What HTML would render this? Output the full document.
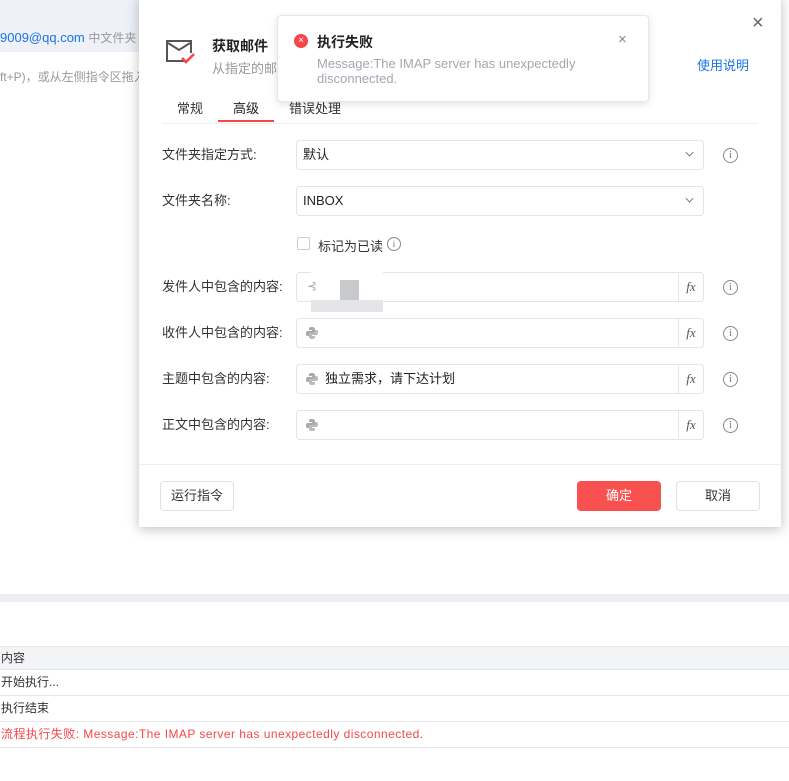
<!DOCTYPE html>
<html><head><meta charset="utf-8"><style>
*{margin:0;padding:0;box-sizing:border-box}
body{width:789px;height:781px;position:relative;overflow:hidden;background:#fff;font-family:"Liberation Sans","Noto Sans CJK SC",sans-serif;font-size:13px;color:#333}
.a{position:absolute;white-space:nowrap}
.lbl{position:absolute;left:162px;font-size:13px;color:#333;line-height:16px}
.inp{position:absolute;left:296px;width:408px;height:30px;border:1px solid #e3e5ea;border-radius:4px;background:#fff}
.inp .t{position:absolute;left:6px;top:6px;font-size:13px;color:#222;line-height:16px}
.chev{position:absolute;right:10px;width:7px;height:7px;border-right:1.2px solid #666;border-bottom:1.2px solid #666;transform:rotate(45deg) scale(.8);top:8px}
.fx{position:absolute;right:0;top:0;width:25px;height:28px;border-left:1px solid #e3e5ea;font-family:"Liberation Serif",serif;font-style:italic;font-size:13px;color:#555;text-align:center;line-height:28px}
.info{position:absolute;left:723px;width:15px;height:15px;border:1px solid #888;border-radius:50%;font-size:10px;line-height:13px;text-align:center;color:#777;font-family:"Liberation Serif",serif}
.py{position:absolute;left:9px;top:8px;width:12px;height:12px}
.row{position:absolute;left:0;width:789px;border-bottom:1px solid #e6e8eb;font-size:12px;line-height:25px;padding-left:1px;color:#333}
</style></head><body>
<div class="a" style="left:0;top:0;width:139px;height:52px;background:#eef1f8"></div>
<div class="a" style="left:0;top:29px;font-size:13px;color:#1a73e8">9009@qq.com <span style="color:#999;font-size:12px">中文件夹</span></div>
<div class="a" style="left:0;top:68px;font-size:12px;color:#999">ft+P)，或从左侧指令区拖入</div>
<div class="a" style="left:0;top:594px;width:789px;height:8px;background:#ebedf0"></div>
<div class="row" style="top:646px;height:24px;background:#f3f4f6;border-top:1px solid #e6e8eb;line-height:23px">内容</div>
<div class="row" style="top:670px;height:26px">开始执行...</div>
<div class="row" style="top:696px;height:26px">执行结束</div>
<div class="row" style="top:722px;height:26px;color:#f5474a;letter-spacing:0.45px">流程执行失败: Message:The IMAP server has unexpectedly disconnected.</div>

<div class="a" style="left:139px;top:-4px;width:642px;height:531px;background:#fff;box-shadow:0 2px 12px rgba(0,0,0,.25)"></div>
<svg class="a" style="left:165px;top:39px" width="32" height="28" viewBox="0 0 32 28"><path d="M21 22H2V2h24v12" fill="none" stroke="#555" stroke-width="2"/><path d="M3 4l11 7 11-7" fill="none" stroke="#555" stroke-width="2"/><path d="M17 19l4 4 8-8" fill="none" stroke="#f5474a" stroke-width="2.6"/></svg>
<div class="a" style="left:212px;top:36px;font-size:14px;font-weight:bold;color:#222">获取邮件</div>
<div class="a" style="left:212px;top:58px;font-size:13px;color:#999">从指定的邮</div>
<div class="a" style="left:697px;top:55px;font-size:13px;color:#1a73e8">使用说明</div>
<div class="a" style="left:752px;top:13px;font-size:20px;color:#666;line-height:20px">×</div>
<div class="a" style="left:177px;top:98px;font-size:13px;color:#333">常规</div>
<div class="a" style="left:233px;top:98px;font-size:13px;color:#222">高级</div>
<div class="a" style="left:218px;top:120px;width:56px;height:2px;background:#f5474a"></div>
<div class="a" style="left:289px;top:98px;font-size:13px;color:#333">错误处理</div>
<div class="a" style="left:162px;top:123px;width:596px;height:1px;background:#eceef1"></div>

<div class="lbl" style="top:147px">文件夹指定方式:</div>
<div class="inp" style="top:140px"><span class="t">默认</span><i class="chev"></i></div>
<div class="info" style="top:148px">i</div>
<div class="lbl" style="top:193px">文件夹名称:</div>
<div class="inp" style="top:186px"><span class="t">INBOX</span><i class="chev"></i></div>
<div class="a" style="left:297px;top:237px;width:13px;height:13px;border:1px solid #ccc;border-radius:2px"></div>
<div class="a" style="left:318px;top:236px;font-size:13px;color:#333">标记为已读</div>
<div class="info" style="left:387px;top:237px;width:14px;height:14px;font-size:9px;line-height:12px">i</div>

<div class="lbl" style="top:279px">发件人中包含的内容:</div>
<div class="inp" style="top:272px"><div class="fx">fx</div></div>
<div class="info" style="top:280px">i</div>
<div class="lbl" style="top:325px">收件人中包含的内容:</div>
<div class="inp" style="top:318px"><svg class="py" viewBox="0 0 12 12"><path d="M6 0C3 0 3 1 3 2v1h3v1H1.5C0 4 0 6 0 7c0 2 1 2 2 2h1V7.5C3 6.5 4 6 5 6h3c1 0 1-1 1-2V2C9 1 8 0 6 0z" fill="#aaa"/><path d="M6 12c3 0 3-1 3-2V9H6V8h4.5C12 8 12 6 12 5c0-2-1-2-2-2H9v1.5C9 5.5 8 6 7 6H4C3 6 3 7 3 8v2c0 1 1 2 3 2z" fill="#bbb"/></svg><div class="fx">fx</div></div>
<div class="info" style="top:326px">i</div>
<div class="lbl" style="top:371px">主题中包含的内容:</div>
<div class="inp" style="top:364px"><svg class="py" viewBox="0 0 12 12"><path d="M6 0C3 0 3 1 3 2v1h3v1H1.5C0 4 0 6 0 7c0 2 1 2 2 2h1V7.5C3 6.5 4 6 5 6h3c1 0 1-1 1-2V2C9 1 8 0 6 0z" fill="#aaa"/><path d="M6 12c3 0 3-1 3-2V9H6V8h4.5C12 8 12 6 12 5c0-2-1-2-2-2H9v1.5C9 5.5 8 6 7 6H4C3 6 3 7 3 8v2c0 1 1 2 3 2z" fill="#bbb"/></svg><span class="t" style="left:28px">独立需求，请下达计划</span><div class="fx">fx</div></div>
<div class="info" style="top:372px">i</div>
<div class="lbl" style="top:417px">正文中包含的内容:</div>
<div class="inp" style="top:410px"><svg class="py" viewBox="0 0 12 12"><path d="M6 0C3 0 3 1 3 2v1h3v1H1.5C0 4 0 6 0 7c0 2 1 2 2 2h1V7.5C3 6.5 4 6 5 6h3c1 0 1-1 1-2V2C9 1 8 0 6 0z" fill="#aaa"/><path d="M6 12c3 0 3-1 3-2V9H6V8h4.5C12 8 12 6 12 5c0-2-1-2-2-2H9v1.5C9 5.5 8 6 7 6H4C3 6 3 7 3 8v2c0 1 1 2 3 2z" fill="#bbb"/></svg><div class="fx">fx</div></div>
<div class="info" style="top:418px">i</div>

<div class="a" style="left:311px;top:272px;width:72px;height:40px;background:#fff"></div>
<div class="a" style="left:311px;top:300px;width:72px;height:12px;background:#e4e5e9"></div>
<div class="a" style="left:340px;top:280px;width:19px;height:20px;background:#c8c9cc"></div>
<div class="a" style="left:307px;top:279px;font-size:12px;color:#aaa">⊰</div>

<div class="a" style="left:139px;top:464px;width:642px;height:1px;background:#eceef1"></div>
<div class="a" style="left:160px;top:481px;width:74px;height:30px;border:1px solid #dfe1e5;border-radius:4px;text-align:center;line-height:28px;font-size:13px">运行指令</div>
<div class="a" style="left:577px;top:481px;width:84px;height:30px;background:#f85150;border-radius:4px;text-align:center;line-height:30px;font-size:13px;color:#fff">确定</div>
<div class="a" style="left:676px;top:481px;width:84px;height:30px;border:1px solid #dfe1e5;border-radius:4px;text-align:center;line-height:28px;font-size:13px">取消</div>

<div class="a" style="left:277px;top:15px;width:372px;height:87px;background:#fff;border:1px solid #e6e7ea;border-radius:4px;box-shadow:0 2px 8px rgba(0,0,0,.12)"></div>
<div class="a" style="left:294px;top:34px;width:14px;height:14px;border-radius:50%;background:#f5474a;color:#fff;font-size:10px;line-height:13px;text-align:center">×</div>
<div class="a" style="left:317px;top:32px;font-size:14px;font-weight:bold;color:#222">执行失败</div>
<div class="a" style="left:317px;top:56px;font-size:13px;color:#a3a7b0;line-height:15px;white-space:normal;width:280px">Message:The IMAP server has unexpectedly disconnected.</div>
<div class="a" style="left:618px;top:31px;font-size:15px;color:#888">×</div>
</body></html>
